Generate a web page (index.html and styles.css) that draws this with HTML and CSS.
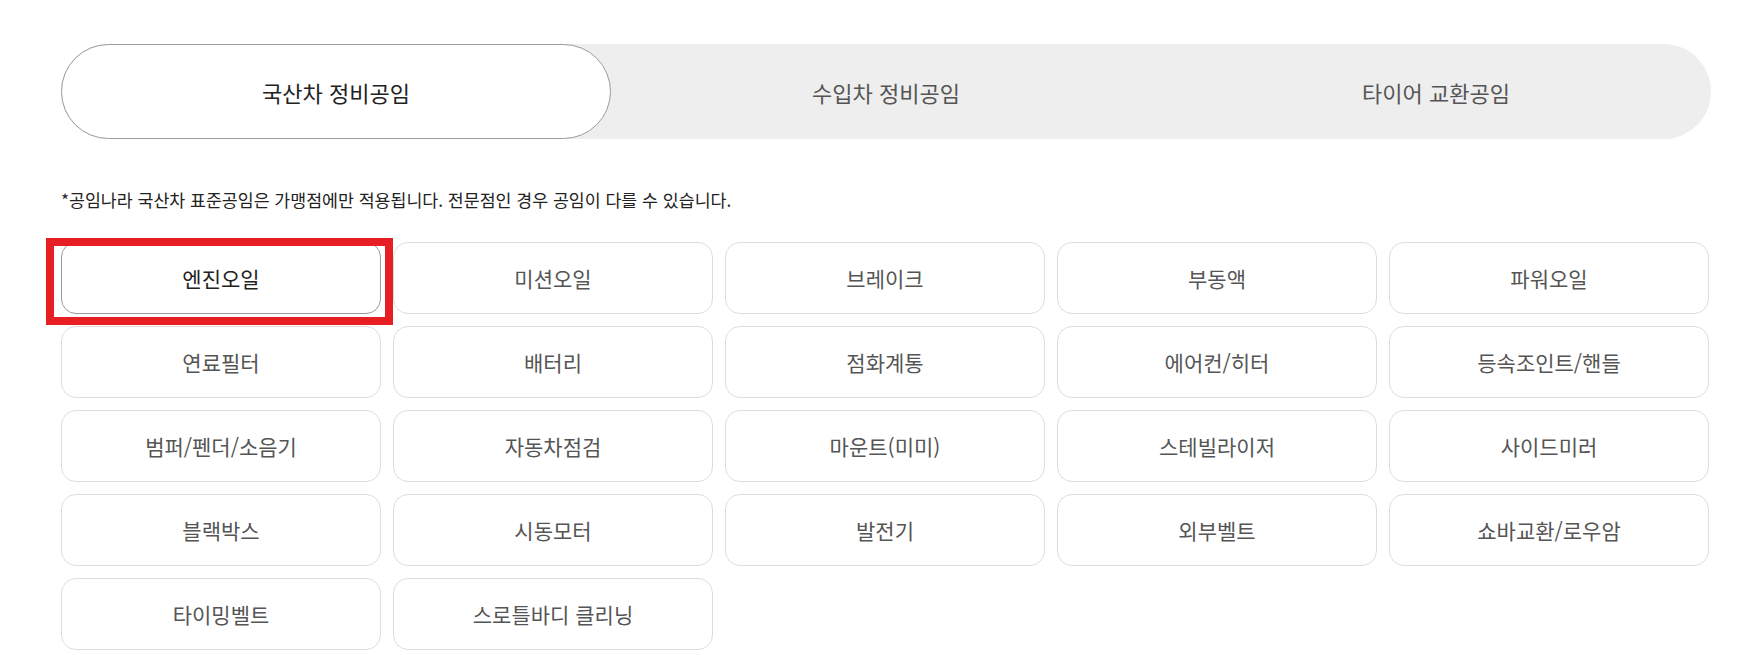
FILE: index.html
```html
<!DOCTYPE html>
<html lang="ko">
<head>
<meta charset="utf-8">
<title>공임나라 정비공임</title>
<link rel="stylesheet" href="styles.css">
</head>
<body>
<div class="wrap">
  <div class="tabs">
    <div class="tab active">국산차 정비공임</div>
    <div class="tab">수입차 정비공임</div>
    <div class="tab">타이어 교환공임</div>
  </div>
  <p class="notice">*공임나라 국산차 표준공임은 가맹점에만 적용됩니다. 전문점인 경우 공임이 다를 수 있습니다.</p>
  <div class="grid">
    <div class="item selected">엔진오일<span class="mark"></span></div>
    <div class="item">미션오일</div>
    <div class="item">브레이크</div>
    <div class="item">부동액</div>
    <div class="item">파워오일</div>
    <div class="item">연료필터</div>
    <div class="item">배터리</div>
    <div class="item">점화계통</div>
    <div class="item">에어컨/히터</div>
    <div class="item">등속조인트/핸들</div>
    <div class="item">범퍼/펜더/소음기</div>
    <div class="item">자동차점검</div>
    <div class="item">마운트(미미)</div>
    <div class="item">스테빌라이저</div>
    <div class="item">사이드미러</div>
    <div class="item">블랙박스</div>
    <div class="item">시동모터</div>
    <div class="item">발전기</div>
    <div class="item">외부벨트</div>
    <div class="item">쇼바교환/로우암</div>
    <div class="item">타이밍벨트</div>
    <div class="item">스로틀바디 클리닝</div>
  </div>
</div>
</body>
</html>
```

FILE: styles.css
```css
* { box-sizing: border-box; }
html, body {
  margin: 0;
  padding: 0;
  background: #fff;
  font-family: "Noto Sans CJK KR", "Noto Sans", sans-serif;
  color: #222;
}
.wrap {
  width: 1650px;
  margin: 44px 0 0 61px;
}
.tabs {
  display: grid;
  grid-template-columns: repeat(3, 1fr);
  height: 95px;
  background: #eeeeee;
  border-radius: 48px;
}
.tab {
  display: flex;
  align-items: center;
  justify-content: center;
  font-size: 22px;
  color: #555;
  border-radius: 48px;
  border: 1px solid transparent;
}
.tab.active {
  background: #fff;
  border-color: #9a9a9a;
  color: #222;
}
.notice {
  margin: 49px 0 0;
  font-size: 17.3px;
  line-height: 24px;
  color: #222;
}
.grid {
  margin-top: 30px;
  display: grid;
  grid-template-columns: repeat(5, 320px);
  grid-auto-rows: 72px;
  gap: 12px;
}
.item {
  position: relative;
  display: flex;
  align-items: center;
  justify-content: center;
  border: 1px solid #dddddd;
  border-radius: 15px;
  font-size: 21px;
  color: #555;
  background: #fff;
}
.item.selected {
  border-color: #9a9a9a;
  color: #222;
}
.mark {
  position: absolute;
  left: -16px;
  top: -5px;
  width: 347px;
  height: 87px;
  border: 8px solid #e71f24;
}
```
